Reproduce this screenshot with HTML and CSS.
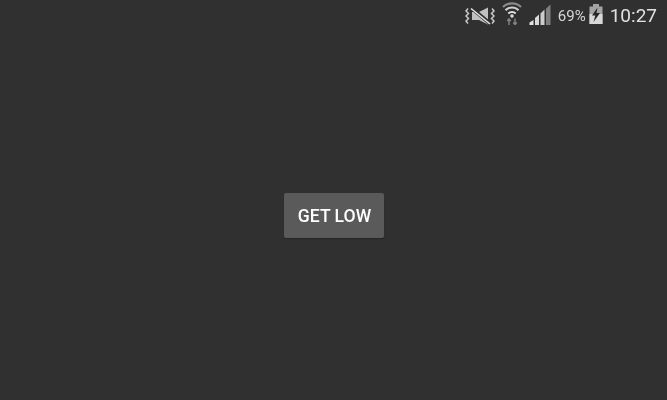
FILE: index.html
```html
<!DOCTYPE html>
<html lang="en">
<head>
<meta charset="utf-8">
<title>Get Low</title>
<link rel="stylesheet" href="styles.css">
</head>
<body>
<div class="screen">
  <header class="status">
    <svg class="ico mute" width="30" height="18" viewBox="0 0 30 18">
      <path d="M7 5 L14 5 L23 0.500 L23 17.500 L14 13 L7 13 Z" fill="#c0c0c0"/>
      <path d="M6 0.500 L25 16.500" stroke="#303030" stroke-width="3.600" fill="none"/>
      <path d="M6 1.500 L25 17" stroke="#e2e2e2" stroke-width="1.600" fill="none"/>
      <path d="M3 1.500 L1 4 L3.500 6.500 L1 9 L3.500 11.500 L1 14 L3 16.500" stroke="#c8c8c8" stroke-width="1.500" fill="none"/>
      <path d="M27 1.500 L29 4 L26.500 6.500 L29 9 L26.500 11.500 L29 14 L27 16.500" stroke="#c8c8c8" stroke-width="1.500" fill="none"/>
    </svg>
    <svg class="ico wifi" width="20" height="24" viewBox="0 0 20 24">
      <path d="M1 6 A13 13 0 0 1 19 6" stroke="#8a8a8a" stroke-width="2.200" fill="none"/>
      <path d="M3.500 9.300 A9 9 0 0 1 16.500 9.300" stroke="#cfcfcf" stroke-width="2" fill="none"/>
      <path d="M6.300 12.500 A5.200 5.200 0 0 1 13.700 12.500" stroke="#dedede" stroke-width="2" fill="none"/>
      <circle cx="10" cy="15" r="1.700" fill="#e0e0e0"/>
      <path d="M7 24 V18 M5.300 20 L7 17.800 L8.700 20 M13 17.500 V23.500 M11.300 21.500 L13 23.700 L14.700 21.500" stroke="#858585" stroke-width="1.400" fill="none"/>
    </svg>
    <svg class="ico signal" width="22" height="21" viewBox="0 0 22 21">
      <path d="M0.500 21 H4.500 V16 L0.500 18.500 Z" fill="#e2e2e2"/>
      <path d="M6 21 H10 V10.500 L6 14 Z" fill="#d8d8d8"/>
      <path d="M11.500 21 H15.500 V5.500 L11.500 9.500 Z" fill="#cccccc"/>
      <path d="M17 21 H21.500 V0.500 L17 4.500 Z" fill="#7e7e7e"/>
    </svg>
    <span class="pct">69%</span>
    <svg class="ico batt" width="14" height="20" viewBox="0 0 14 20">
      <path d="M4 0 H10 V2.500 H13.500 V20 H0.500 V2.500 H4 Z" fill="#a4a4a4"/>
      <path d="M0.500 10 H13.500 V20 H0.500 Z" fill="#d8d8d8"/>
      <path d="M8.500 3.500 L3 11.500 H6.300 L4.500 18 L11 9 H7.500 Z" fill="#262626"/>
    </svg>
    <span class="time">10:27</span>
  </header>
  <main class="stage">
    <button class="btn" type="button"><span class="label">GET LOW</span></button>
  </main>
</div>
</body>
</html>
```

FILE: styles.css
```css
* { box-sizing: border-box; }
html, body { margin: 0; padding: 0; }
body { width: 667px; height: 400px; overflow: hidden; background: #303030; font-family: "Roboto", "Liberation Sans", sans-serif; }
.screen { width: 667px; height: 400px; display: flex; flex-direction: column; }
.status { height: 32px; flex: none; display: flex; align-items: flex-start; justify-content: flex-end; padding-right: 10px; color: #d6d6d6; filter: blur(0.35px); }
.ico { display: block; flex: none; }
.mute { margin: 7px 7px 0 0; }
.wifi { margin: 1px 7px 0 0; }
.signal { margin: 4px 7px 0 0; }
.pct { font-size: 15px; line-height: 20px; margin: 6px 3px 0 0; }
.batt { margin: 4px 7px 0 0; }
.time { font-size: 19px; line-height: 24px; margin-top: 4px; color: #e0e0e0; }
.stage { flex: 1; display: flex; justify-content: center; padding-top: 161px; }
.btn { width: 100px; height: 45px; border: 0; border-radius: 2px; background: #5a5a5a; color: #fff; font: 500 17.6px "Roboto", "Liberation Sans", sans-serif; padding: 0 0 0 2px; box-shadow: 0 1px 1px rgba(0,0,0,.25); }
.label { display: block; filter: blur(0.35px); }
```
